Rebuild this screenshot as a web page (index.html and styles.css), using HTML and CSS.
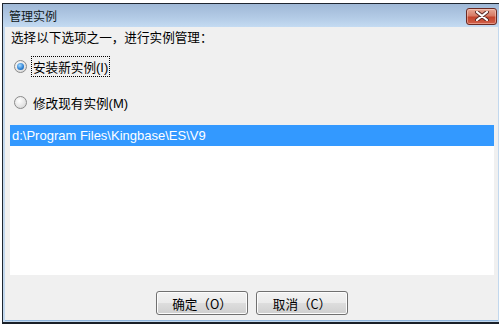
FILE: index.html
```html
<!DOCTYPE html>
<html>
<head>
<meta charset="utf-8">
<link rel="stylesheet" href="styles.css">
</head>
<body>
<div class="window">
  <div class="titlebar">
    <span class="title">管理实例</span>
    <button class="close" aria-label="close">
      <svg width="14" height="10" viewBox="0 0 14 10">
        <path d="M2 1 L12 9 M12 1 L2 9" stroke="#5a2a26" stroke-width="4" stroke-linecap="round"/>
        <path d="M2 1 L12 9 M12 1 L2 9" stroke="#ffffff" stroke-width="2.2" stroke-linecap="round"/>
      </svg>
    </button>
  </div>
  <div class="body">
    <div class="prompt">选择以下选项之一，进行实例管理：</div>
    <div class="option first">
      <span class="radio checked"></span>
      <span class="label focus">安装新实例<span class="mn">(I)</span></span>
    </div>
    <div class="option second">
      <span class="radio"></span>
      <span class="label">修改现有实例<span class="mn">(M)</span></span>
    </div>
    <div class="listbox">
      <div class="item selected">d:\Program Files\Kingbase\ES\V9</div>
    </div>
    <div class="buttons">
      <button class="btn">确定（O）</button>
      <button class="btn">取消（C）</button>
    </div>
  </div>
</div>
</body>
</html>
```

FILE: styles.css
```css
html, body {
  margin: 0;
  padding: 0;
  background: #ffffff;
  overflow: hidden;
}
body {
  width: 500px;
  height: 324px;
  font-family: "Noto Sans CJK SC", "Liberation Sans", sans-serif;
  color: #000;
}
.window {
  margin: 3px 0 0 2px;
  width: 497px;
  height: 321px;
  border-top: 1px solid #1e2630;
  border-left: 1px solid #1e2630;
  border-bottom: 2px solid #1a2028;
  background: #c2d8ee;
  display: flex;
  flex-direction: column;
  box-sizing: border-box;
}
.titlebar {
  height: 23px;
  flex: none;
  display: flex;
  align-items: center;
  justify-content: space-between;
  background: linear-gradient(#9fb8d6, #b3cbe6 60%, #c4dbf2);
  padding: 0 2px 0 6px;
}
.title {
  font-size: 12px;
  line-height: 14px;
  color: #101820;
  margin-top: 1px;
}
.close {
  width: 31px;
  height: 17px;
  margin-top: 1px;
  padding: 0;
  border: 1px solid #6b2a22;
  border-radius: 3px;
  background: linear-gradient(#e7a996, #d77a64 45%, #c4442c 55%, #d0604a);
  display: flex;
  align-items: center;
  justify-content: center;
  box-shadow: inset 0 0 0 1px rgba(255,220,210,0.45);
}
.body {
  flex: 1;
  margin: 0 1px 1px 2px;
  background: #f0f0f0;
  display: flex;
  flex-direction: column;
  font-size: 12.6px;
  border-bottom: 1px solid #8fb5dc;
}
.prompt {
  margin: 1px 0 0 6px;
  line-height: 18px;
}
.option {
  display: flex;
  align-items: center;
  height: 21px;
  margin-left: 9px;
}
.option.first { margin-top: 10px; }
.option.second { margin-top: 15px; }
.radio {
  width: 11px;
  height: 11px;
  border-radius: 50%;
  border: 1px solid #8a8a8a;
  background: radial-gradient(circle at 40% 35%, #ffffff, #e4e4e4 60%, #cfcfcf);
  box-sizing: content-box;
  margin-right: 4px;
  position: relative;
  flex: none;
}
.radio.checked::after {
  content: "";
  position: absolute;
  left: 2px;
  top: 2px;
  width: 7px;
  height: 7px;
  border-radius: 50%;
  background: radial-gradient(circle at 40% 35%, #a8dcff, #2a7fd4 60%, #14508f);
}
.label {
  padding: 0 1px;
  height: 19px;
  line-height: 19px;
  border: 1px dotted transparent;
}
.label.focus {
  border-color: #000;
}
.mn {
  font-family: "Liberation Sans", sans-serif;
  font-size: 13px;
}
.listbox {
  margin: 12px 0 0 5px;
  width: 484px;
  height: 150px;
  background: #ffffff;
  flex: none;
}
.item {
  height: 21px;
  line-height: 21px;
  padding-left: 2px;
  font-family: "Liberation Sans", sans-serif;
  font-size: 13px;
}
.item.selected {
  background: #3399ff;
  color: #ffffff;
}
.buttons {
  display: flex;
  gap: 8px;
  margin: 16px 0 0 151px;
}
.btn {
  width: 92px;
  height: 24px;
  border: 1px solid #707070;
  border-radius: 3px;
  background: linear-gradient(#f2f2f2, #ebebeb 48%, #dddddd 52%, #cfcfcf);
  font-family: "Noto Sans CJK SC", sans-serif;
  font-size: 12.6px;
  color: #000;
  padding: 0;
  box-shadow: inset 0 0 0 1px #fcfcfc;
}
```
